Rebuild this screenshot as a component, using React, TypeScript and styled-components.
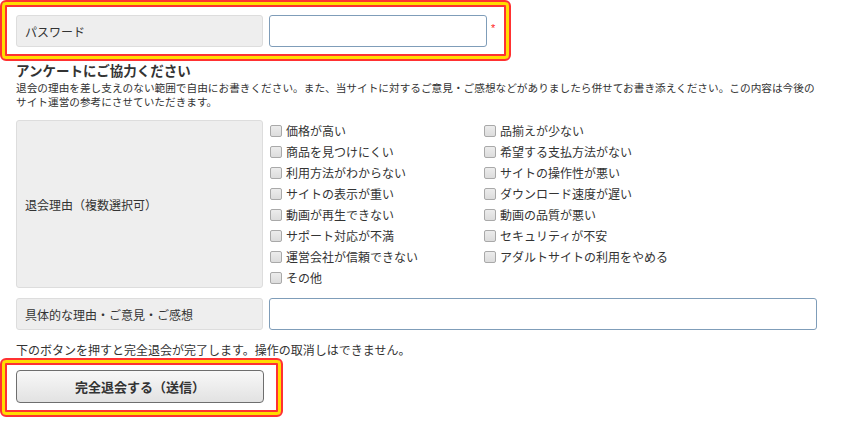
import React from "react";
import styled, { createGlobalStyle } from "styled-components";

const Global = createGlobalStyle`
  html, body { margin: 0; padding: 0; background: #fff; }
  body {
    font-family: "Noto Sans CJK JP", "Noto Sans", sans-serif;
    color: #333;
  }
  * { box-sizing: border-box; }
`;

const Page = styled.div`
  width: 853px;
  display: flex;
  flex-direction: column;
`;

const Highlight = styled.div<{ $w: number; $pad: string }>`
  width: ${(p) => p.$w}px;
  border: 2px solid #ff3131;
  border-radius: 6px;
  box-shadow: inset 0 0 0 3px #ffdc00, inset 0 0 0 5px #ff3131;
  padding: ${(p) => p.$pad};
  display: flex;
  align-items: center;
`;

const Section = styled.div<{ $mt?: number }>`
  padding: 0 16px;
  margin-top: ${(p) => p.$mt ?? 0}px;
`;

const Row = styled.div`
  display: flex;
  gap: 6px;
  align-items: stretch;
`;

const Label = styled.div<{ $h: number }>`
  width: 247px;
  height: ${(p) => p.$h}px;
  background: #eeeeee;
  border: 1px solid #dddddd;
  border-radius: 3px;
  padding-left: 8px;
  display: flex;
  align-items: center;
  font-size: 12px;
  color: #333;
`;

const TextInput = styled.input<{ $w: number }>`
  width: ${(p) => p.$w}px;
  height: 32px;
  border: 1px solid #7f9db9;
  border-radius: 3px;
  background: #fff;
  margin: 0;
  padding: 0 6px;
  outline: none;
`;

const Required = styled.span`
  color: #ff1a1a;
  font-size: 11px;
  margin-left: 4px;
  margin-top: -6px;
  font-family: "Liberation Sans", sans-serif;
`;

const Heading = styled.h2`
  margin: 0;
  font-size: 13.5px;
  font-weight: bold;
  line-height: 18px;
  color: #333;
`;

const Desc = styled.p`
  margin: 2px 0 0;
  font-size: 10.66px;
  line-height: 14px;
  white-space: nowrap;
  color: #333;
`;

const CheckGrid = styled.div`
  display: grid;
  grid-template-columns: 214px 214px;
  grid-auto-rows: 21px;
`;

const CheckItem = styled.label`
  display: flex;
  align-items: center;
  font-size: 12px;
  color: #333;
  white-space: nowrap;
`;

const Box = styled.input`
  appearance: none;
  -webkit-appearance: none;
  width: 12px;
  height: 12px;
  margin: 0 4px 0 1px;
  border: 1px solid #a9a9a9;
  border-radius: 2px;
  background: linear-gradient(#ececec, #dcdcdc);
  flex: none;
`;

const Notice = styled.p`
  margin: 12px 0 0;
  font-size: 12px;
  line-height: 16px;
  color: #333;
`;

const Submit = styled.button`
  width: 248px;
  height: 33px;
  border: 1px solid #6e6e6e;
  border-radius: 4px;
  background: linear-gradient(#f8f8f8, #e2e2e2);
  font-family: "Noto Sans CJK JP", sans-serif;
  font-size: 13px;
  font-weight: bold;
  color: #333;
  padding: 0;
`;

const reasons: [string, string | null][] = [
  ["価格が高い", "品揃えが少ない"],
  ["商品を見つけにくい", "希望する支払方法がない"],
  ["利用方法がわからない", "サイトの操作性が悪い"],
  ["サイトの表示が重い", "ダウンロード速度が遅い"],
  ["動画が再生できない", "動画の品質が悪い"],
  ["サポート対応が不満", "セキュリティが不安"],
  ["運営会社が信頼できない", "アダルトサイトの利用をやめる"],
  ["その他", null],
];

export default function App() {
  return (
    <Page>
      <Global />
      <Highlight $w={511} $pad="13px 0 12px 14px">
        <Row>
          <Label $h={32}>パスワード</Label>
          <TextInput type="password" $w={218} />
        </Row>
        <Required>*</Required>
      </Highlight>

      <Section>
        <Heading>アンケートにご協力ください</Heading>
        <Desc>
          退会の理由を差し支えのない範囲で自由にお書きください。また、当サイトに対するご意見・ご感想などがありましたら併せてお書き添えください。この内容は今後の
          <br />
          サイト運営の参考にさせていただきます。
        </Desc>
      </Section>

      <Section $mt={11}>
        <Row>
          <Label $h={168}>退会理由（複数選択可）</Label>
          <CheckGrid>
            {reasons.flatMap(([a, b], i) => [
              <CheckItem key={`a${i}`}>
                <Box type="checkbox" />
                {a}
              </CheckItem>,
              b ? (
                <CheckItem key={`b${i}`}>
                  <Box type="checkbox" />
                  {b}
                </CheckItem>
              ) : (
                <span key={`b${i}`} />
              ),
            ])}
          </CheckGrid>
        </Row>
      </Section>

      <Section $mt={10}>
        <Row>
          <Label $h={32}>具体的な理由・ご意見・ご感想</Label>
          <TextInput type="text" $w={548} />
        </Row>
        <Notice>下のボタンを押すと完全退会が完了します。操作の取消しはできません。</Notice>
      </Section>

      <Highlight $w={283} $pad="10px 0 12px 14px">
        <Submit type="button">完全退会する（送信）</Submit>
      </Highlight>
    </Page>
  );
}
